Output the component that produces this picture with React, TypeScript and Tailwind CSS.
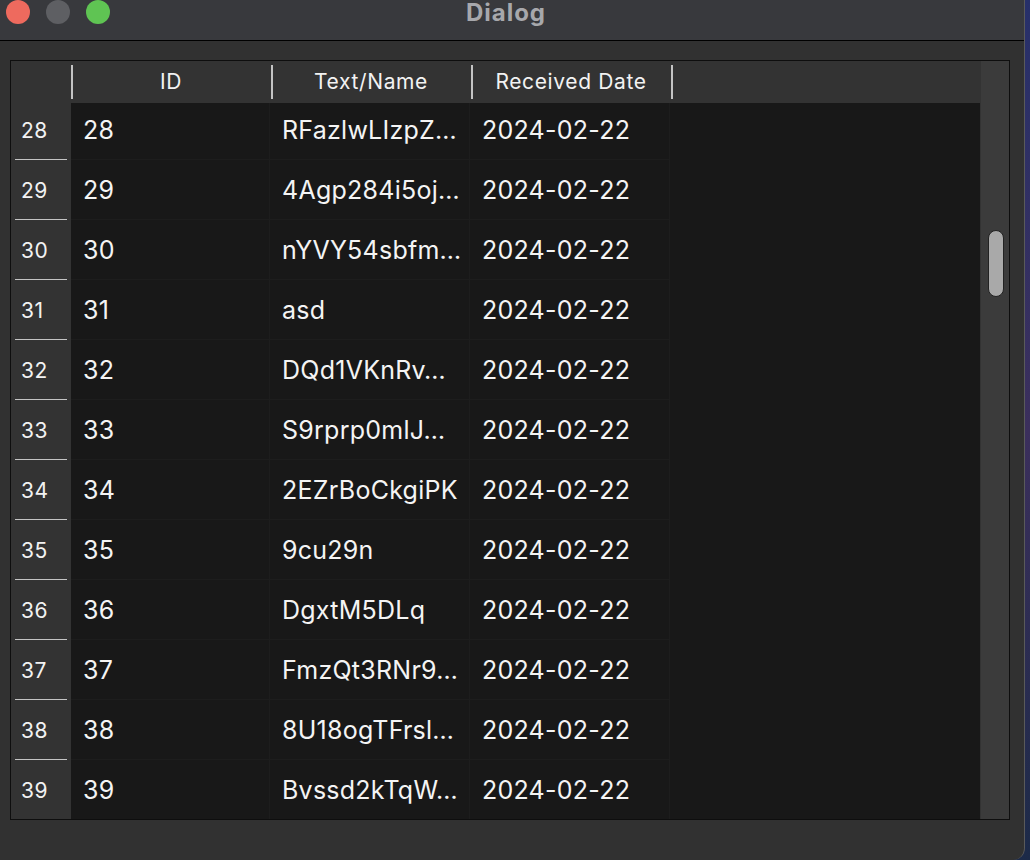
import React from 'react'

const rows = [
  { id: 28, name: 'RFazlwLIzpZ…', date: '2024-02-22' },
  { id: 29, name: '4Agp284i5oj…', date: '2024-02-22' },
  { id: 30, name: 'nYVY54sbfm…', date: '2024-02-22' },
  { id: 31, name: 'asd', date: '2024-02-22' },
  { id: 32, name: 'DQd1VKnRv…', date: '2024-02-22' },
  { id: 33, name: 'S9rprp0mlJ…', date: '2024-02-22' },
  { id: 34, name: '2EZrBoCkgiPK', date: '2024-02-22' },
  { id: 35, name: '9cu29n', date: '2024-02-22' },
  { id: 36, name: 'DgxtM5DLq', date: '2024-02-22' },
  { id: 37, name: 'FmzQt3RNr9…', date: '2024-02-22' },
  { id: 38, name: '8U18ogTFrsl…', date: '2024-02-22' },
  { id: 39, name: 'Bvssd2kTqW…', date: '2024-02-22' },
]

const columns = ['ID', 'Text/Name', 'Received Date']

function HeaderCell({ label }: { label: string }) {
  return (
    <div className="w-[200px] flex items-center">
      <div className="w-[2px] h-[34px] bg-[#c4c4c4]" />
      <div className="flex-1 text-center text-[21px] tracking-[0.03em] text-[#f2f2f2] pr-[2px]">{label}</div>
    </div>
  )
}

export default function App() {
  return (
    <div
      className="w-[1030px] h-[860px] flex overflow-hidden bg-gradient-to-b from-[#27306a] via-[#3b2f5c] to-[#1c2a48]"
      style={{ fontFamily: 'Inter, "Noto Sans", sans-serif' }}
    >
      <div className="w-[1025px] h-full flex flex-col bg-[#313131] border-r border-[#5a5a5a] rounded-br-[12px] overflow-hidden">
        {/* Title bar */}
        <div className="h-[41px] shrink-0 bg-[#38393d] border-b border-black flex items-start relative">
          <div className="flex gap-[16px] pl-[6px]">
            <div className="w-6 h-6 rounded-full bg-[#ee6a5e]" />
            <div className="w-6 h-6 rounded-full bg-[#5e5f63]" />
            <div className="w-6 h-6 rounded-full bg-[#5fc453]" />
          </div>
          <div className="flex-1 text-center font-bold text-[24px] tracking-[0.04em] leading-[26px] text-[#a7a8ac] pr-[122px]">
            Dialog
          </div>
        </div>

        {/* Content */}
        <div className="flex-1 pt-[19px] pl-[10px]">
          <div className="w-[1000px] h-[760px] border border-[#0e0e0e] flex">
            <div className="w-[969px] flex flex-col">
              {/* Header */}
              <div className="h-[42px] shrink-0 bg-[#333333] flex">
                <div className="w-[60px]" />
                {columns.map((c) => (
                  <HeaderCell key={c} label={c} />
                ))}
                <div className="flex items-center">
                  <div className="w-[2px] h-[34px] bg-[#c4c4c4]" />
                </div>
              </div>

              {/* Body */}
              <div className="flex-1 overflow-hidden bg-[#181818]">
                <div className="-mt-[3px]">
                  {rows.map((r) => (
                    <div key={r.id} className="h-[60px] flex">
                      <div className="w-[60px] bg-[#333333] relative flex items-center pl-[10px] pt-[2px] text-[21px] tracking-[0.02em] text-[#f2f2f2]">
                        {r.id}
                        <div className="absolute left-[4px] bottom-[-1px] w-[52px] h-[2px] bg-[#c4c4c4]" />
                      </div>
                      <div className="w-[199px] flex items-center pl-[12px] pt-[2px] text-[25px] tracking-[0.01em] text-[#f4f4f4] border-r border-b border-[#1d1d1d]">
                        {r.id}
                      </div>
                      <div className="w-[200px] flex items-center pl-[12px] pt-[2px] text-[25px] tracking-[0.01em] text-[#f4f4f4] border-r border-b border-[#1d1d1d] whitespace-nowrap overflow-hidden">
                        {r.name}
                      </div>
                      <div className="w-[200px] flex items-center pl-[12px] pt-[2px] text-[25px] tracking-[0.01em] text-[#f4f4f4] border-r border-b border-[#1d1d1d]">
                        {r.date}
                      </div>
                    </div>
                  ))}
                </div>
              </div>
            </div>

            {/* Scrollbar */}
            <div className="w-[29px] bg-[#3b3b3b] border-l border-[#333] pt-[169px] pl-[7px]">
              <div className="w-[16px] h-[67px] rounded-full bg-[#a9a9a9] border border-[#222]" />
            </div>
          </div>
        </div>
      </div>
    </div>
  )
}
